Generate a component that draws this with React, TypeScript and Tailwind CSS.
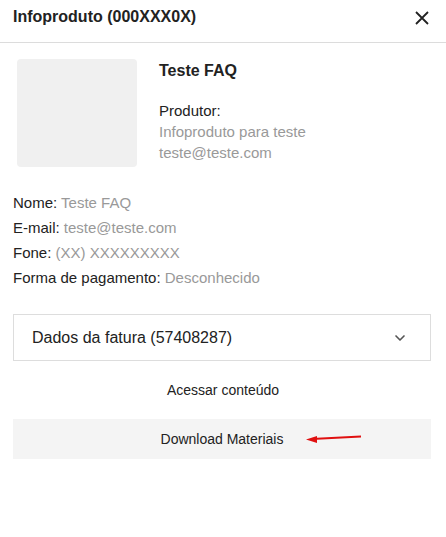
import { ChevronDown } from "lucide-react";

const rows = [
  { label: "Nome:", value: "Teste FAQ" },
  { label: "E-mail:", value: "teste@teste.com" },
  { label: "Fone:", value: "(XX) XXXXXXXXX" },
  { label: "Forma de pagamento:", value: "Desconhecido" },
];

export default function App() {
  return (
    <div className="w-[446px] h-[537px] bg-white text-[#222] font-['Liberation_Sans',Arial,sans-serif]">
      <div className="flex items-start justify-between h-[43px] pt-[7px] pl-[13px] pr-[17px] border-b border-[#dcdcdc]">
        <h1 className="text-[16px] leading-[20px] font-bold">Infoproduto (000XXX0X)</h1>
        <svg width="14" height="14" viewBox="0 0 14 14" className="mt-[4px]">
          <path d="M1 1L13 13M13 1L1 13" stroke="#222" strokeWidth="1.8" />
        </svg>
      </div>

      <div className="flex gap-[22px] pt-[16px] pl-[17px]">
        <div className="w-[120px] h-[108px] rounded bg-[#f0f0f0]" />
        <div className="pt-[2px]">
          <div className="text-[16px] font-bold leading-[20px]">Teste FAQ</div>
          <div className="mt-[19px] text-[15px] leading-[21px]">
            <div>Produtor:</div>
            <div className="text-[#999]">Infoproduto para teste</div>
            <div className="text-[#999]">teste@teste.com</div>
          </div>
        </div>
      </div>

      <div className="mt-[23px] px-[13px] text-[15px] leading-[25px]">
        {rows.map((r) => (
          <div key={r.label}>
            {r.label} <span className="text-[#999]">{r.value}</span>
          </div>
        ))}
      </div>

      <div className="mt-[24px] ml-[13px] mr-[15px] h-[47px] border border-[#ddd] flex items-center justify-between pl-[18px] pr-[22px]">
        <span className="text-[16px]">Dados da fatura (57408287)</span>
        <ChevronDown className="w-[16px] h-[16px] text-[#555]" strokeWidth={2.5} />
      </div>

      <div className="h-[58px] flex items-center justify-center text-[14px]">Acessar conteúdo</div>

      <div className="relative ml-[13px] mr-[15px] h-[40px] bg-[#f4f4f4] flex items-center justify-center text-[14px]">
        Download Materiais
        <svg className="absolute left-[291px] top-[12px]" width="60" height="14" viewBox="0 0 60 14">
          <line x1="8" y1="8" x2="57" y2="5.5" stroke="#e01010" strokeWidth="2" />
          <polygon points="2,8.5 13,5 13,12" fill="#e01010" />
        </svg>
      </div>
    </div>
  );
}
